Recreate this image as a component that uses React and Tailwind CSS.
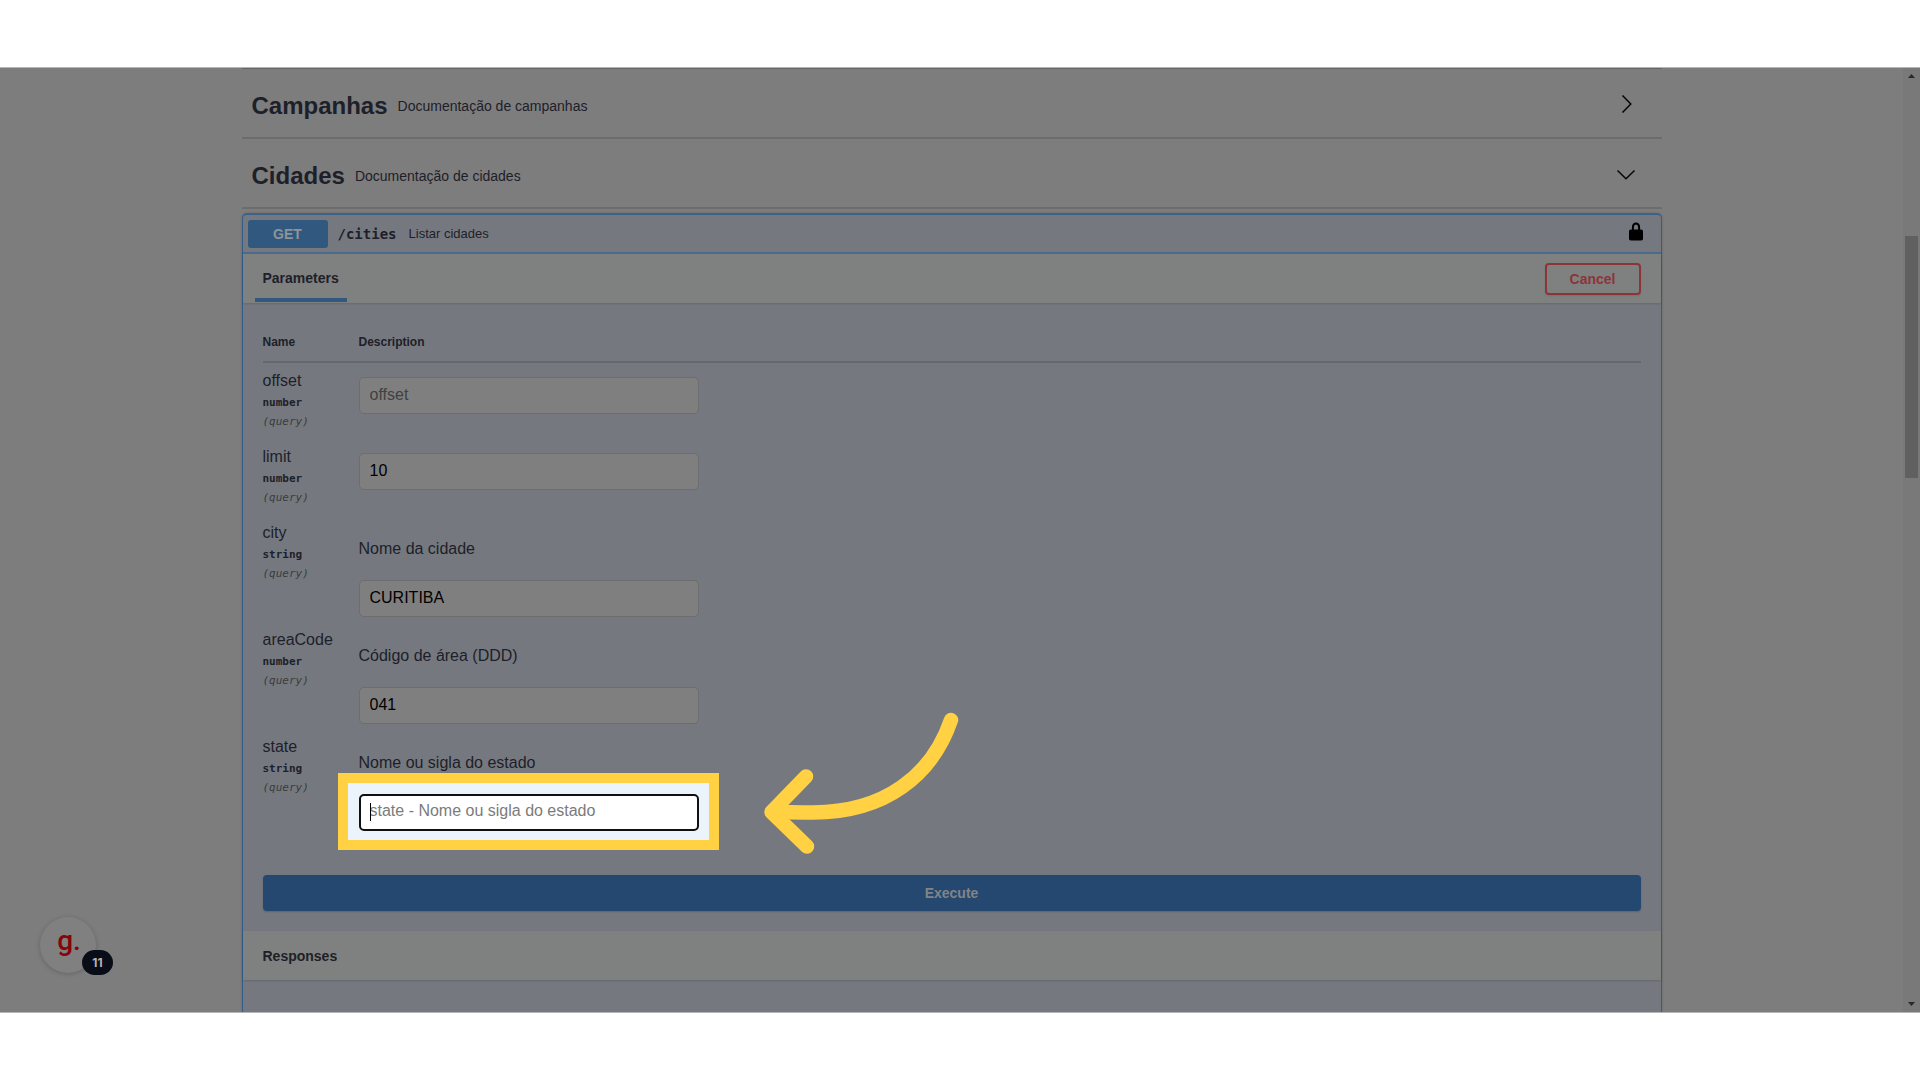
import React from "react";

const params = [
  { name: "offset", type: "number", placeholder: "offset" },
  { name: "limit", type: "number", value: "10" },
  { name: "city", type: "string", description: "Nome da cidade", value: "CURITIBA" },
  { name: "areaCode", type: "number", description: "Código de área (DDD)", value: "041" },
  {
    name: "state",
    type: "string",
    description: "Nome ou sigla do estado",
    placeholder: "state - Nome ou sigla do estado",
    highlighted: true,
  },
];

function Chevron({ open }) {
  return (
    <svg viewBox="0 0 20 20" className="mb-1 size-5" fill="none" stroke="#060606" strokeWidth="1.5" aria-hidden="true">
      {open ? <path d="M1.5 6.500 10 14.800 18.5 6.500" /> : <path d="M6.5 1.5 14.8 10 6.5 18.5" />}
    </svg>
  );
}

function TagHeader({ title, description, open }) {
  return (
    <button
      type="button"
      aria-expanded={open}
      className="flex h-[70px] w-full items-center border-b-2 border-[#6c6c6d] pt-[5px] pr-[26px] pl-[10px] text-left"
    >
      <h2 className="text-2xl font-bold">{title}</h2>
      <span className="ml-[10px] flex-1 text-sm">{description}</span>
      <Chevron open={open} />
    </button>
  );
}

function Arrow() {
  return (
    <svg
      viewBox="0 0 204 156"
      className="pointer-events-none absolute -top-[88px] left-[401px] h-[156px] w-[204px]"
      fill="none"
      stroke="#ffd143"
      strokeWidth="14.5"
      strokeLinecap="round"
      strokeLinejoin="round"
      aria-hidden="true"
    >
      <path d="M191 14C172 69.500 125 106.500 53 106.500C38 106.500 25 106 12 106" />
      <path d="M46 70.500 11.500 106 47 140.500" />
    </svg>
  );
}

function Field({ param }) {
  const id = `param-${param.name}`;
  if (param.highlighted) {
    return (
      <div className="relative w-[340px]">
        <div className="absolute -top-[21px] -right-5 -bottom-[19px] -left-[21px] border-10 border-[#ffd143] bg-[#ebf3fb]" />
        <input
          id={id}
          type="text"
          placeholder={param.placeholder}
          className="relative block h-[37px] w-full rounded-[5px] border-2 border-[#101010] bg-white px-[9px] pb-[3px] text-base text-black outline-none placeholder:text-[#7b7b7b]"
        />
        <span className="absolute top-[9px] left-[11px] h-[18px] w-px bg-black" />
        <Arrow />
      </div>
    );
  }
  return (
    <input
      id={id}
      type="text"
      defaultValue={param.value}
      placeholder={param.placeholder}
      className="block h-[37px] w-[340px] rounded-[5px] border border-[#6d6d6e] bg-[#7f7f7f] px-[10px] pb-[2px] text-base text-black outline-none placeholder:text-[#414141]"
    />
  );
}

function ParamRow({ param }) {
  return (
    <tr className="align-top">
      <td className="pt-2 pb-[10px]">
        <label htmlFor={`param-${param.name}`} className="block text-base leading-5">
          {param.name}
        </label>
        <div className="font-['DejaVu_Sans_Mono',monospace] text-[11px] leading-6 font-bold">{param.type}</div>
        <div className="font-['DejaVu_Sans_Mono',monospace] text-[11px] leading-[14px] text-[#3b3b3b] italic">(query)</div>
      </td>
      <td className="pt-[14px] pb-[5px]">
        {param.description && <p className="mt-[10px] mb-[21px] text-base leading-5">{param.description}</p>}
        <Field param={param} />
      </td>
    </tr>
  );
}

function Operation() {
  return (
    <section className="mt-1 flex flex-1 flex-col rounded-t-[5px] border-x border-t-2 border-x-[#315d88] border-t-[#3d6287] bg-[#75797f] shadow-[0_0_3px_rgba(0,0,0,0.15)]">
      <div className="flex h-[39px] items-center border-b-2 border-[#4b6b8c] pr-[18px] pl-[5px]">
        <button type="button" className="h-7 w-20 rounded-[3px] bg-[#31587f] text-sm font-bold text-[#8f9498]">
          GET
        </button>
        <span className="ml-[10px] font-['DejaVu_Sans_Mono',monospace] text-sm font-bold">/cities</span>
        <span className="ml-3 flex-1 text-[13px]">Listar cidades</span>
        <button type="button" aria-label="Authorize" className="mb-1">
          <svg viewBox="0 0 14 19" className="h-[19px] w-[14px]" aria-hidden="true">
            <path d="M3.900 9V5a3.100 3.600 0 0 1 6.200 0v4" fill="none" stroke="#000" strokeWidth="2" />
            <rect y="7.500" width="14" height="11" rx="1.800" fill="#000" />
          </svg>
        </button>
      </div>

      <div className="flex h-[49px] items-center justify-between bg-[#7e817f] pr-5 pl-3 shadow-[0_1px_2px_rgba(0,0,0,0.15)]">
        <h3 className="mb-px flex h-12 items-center border-b-4 border-[#31587f] pt-[3px] pr-2 pl-2 text-sm font-bold">
          Parameters
        </h3>
        <button
          type="button"
          className="h-8 w-24 rounded-[4px] border-2 border-[#8c3438] text-sm font-bold text-[#8c3438] shadow-[0_1px_2px_rgba(0,0,0,0.1)]"
        >
          Cancel
        </button>
      </div>

      <div className="px-5">
        <table className="w-full">
          <thead>
            <tr className="border-b-2 border-[#64686d] text-left text-xs">
              <th className="h-[59px] w-24 pt-5 font-bold">Name</th>
              <th className="pt-5 font-bold">Description</th>
            </tr>
          </thead>
          <tbody>
            {params.map((param) => (
              <ParamRow key={param.name} param={param} />
            ))}
          </tbody>
        </table>
        <button
          type="button"
          className="mt-[39px] h-9 w-full rounded-[4px] bg-[#254871] text-sm font-bold text-[#808487] shadow-[0_1px_2px_rgba(0,0,0,0.2)]"
        >
          Execute
        </button>
      </div>

      <div className="mt-5 flex h-[49px] shrink-0 items-center bg-[#7e817f] px-5 shadow-[0_1px_2px_rgba(0,0,0,0.15)]">
        <h3 className="text-sm font-bold">Responses</h3>
      </div>
    </section>
  );
}

function ChatWidget() {
  return (
    <button
      type="button"
      aria-label="Chat"
      className="absolute bottom-[39px] left-10 size-14 rounded-full bg-[#808080] shadow-[0_1px_5px_rgba(0,0,0,0.2)]"
    >
      <span className="block pb-2 pl-[2px] font-['Roboto',sans-serif] text-[28px] leading-8 font-medium text-[#870408]">g.</span>
      <span className="absolute -right-[17px] -bottom-[2px] flex h-[25px] w-[31px] items-center justify-center rounded-full bg-[#090d18] font-['Inter',sans-serif] text-xs font-bold text-[#b4b4bc]">
        11
      </span>
    </button>
  );
}

function ScrollBar() {
  return (
    <div className="flex w-[17px] flex-col items-center bg-[#797979] py-[6px]" aria-hidden="true">
      <svg viewBox="0 0 7 4" className="h-1 w-[7px]" fill="#282828">
        <path d="M0 4 3.500 0 7 4Z" />
      </svg>
      <div className="flex w-full flex-1 flex-col px-[2px]">
        <div className="grow-[158]" />
        <div className="grow-[242] bg-[#606060]" />
        <div className="grow-[524]" />
      </div>
      <svg viewBox="0 0 7 4" className="h-1 w-[7px]" fill="#282828">
        <path d="M0 0 3.500 4 7 0Z" />
      </svg>
    </div>
  );
}

export default function App() {
  return (
    <div className="flex h-screen flex-col bg-white py-[67px] font-['Liberation_Sans',Arial,sans-serif] text-[#1e2029]">
      <div className="relative flex min-h-0 flex-1 overflow-hidden border-y border-[#b5b5b5] bg-[#7d7d7d]">
        <main className="flex flex-1 justify-center overflow-hidden">
          <div className="flex w-full max-w-[1420px] flex-col border-t border-[#656565]">
            <TagHeader title="Campanhas" description="Documentação de campanhas" open={false} />
            <TagHeader title="Cidades" description="Documentação de cidades" open />
            <Operation />
          </div>
        </main>
        <ScrollBar />
        <ChatWidget />
      </div>
    </div>
  );
}
